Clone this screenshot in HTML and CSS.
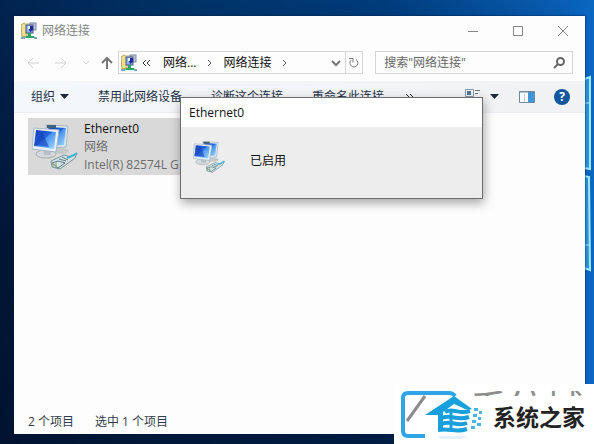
FILE: index.html
```html
<!DOCTYPE html>
<html lang="zh-CN">
<head>
    <meta charset="UTF-8">
    <meta name="viewport" content="width=device-width, initial-scale=1.0">
    <title>网络连接</title>
    <link rel="stylesheet" href="styles.css">
</head>
<body>
    <!-- shared icons -->
    <svg class="icon-defs" width="0" height="0">
        <symbol id="icon-folder" viewBox="0 0 16 18">
            <path d="M0 3l3-2 3 1v12l-5 1z" fill="#f0df8c" stroke="#b8a65a" stroke-width="1"/>
            <path d="M4 1h7v3H4z" fill="#d9d7b0"/>
            <rect x="9" y="1" width="6" height="7" fill="#b9c3dc" stroke="#7d8aa8"/>
            <rect x="5" y="3" width="7" height="8" fill="#8fb0ee" stroke="#4a5578"/>
            <path d="M7 4h5v4l-3 2z" fill="#1a2a9c"/>
            <rect x="7" y="4" width="2" height="3" fill="#e8f2ff"/>
            <path d="M7 11h3v3h3l1 2H4l1-2h2z" fill="#25a567"/>
            <path d="M0 16h4M13 16h3" stroke="#7fa6c4" stroke-width="2"/>
        </symbol>
        <symbol id="icon-network" viewBox="0 0 46 46">
            <defs>
                <linearGradient id="screen" x1="0" y1="0" x2="1" y2="1">
                    <stop offset="0" stop-color="#1238b4"/>
                    <stop offset="0.45" stop-color="#2565dc"/>
                    <stop offset="0.5" stop-color="#4b93f2"/>
                    <stop offset="1" stop-color="#a4dcff"/>
                </linearGradient>
            </defs>
            <ellipse cx="28" cy="27" rx="9" ry="3" fill="#c3c8cb"/>
            <path d="M14 1l22 1-2 21-16 1z" fill="#dfe9f0" stroke="#a5b4bf" stroke-width="1"/>
            <path d="M16 3l18 1-2 17-13 1z" fill="url(#screen)"/>
            <path d="M15 1h9v3h-9z" fill="#3f6078"/>
            <ellipse cx="14" cy="30" rx="10" ry="4" fill="#d6dadc" stroke="#a9aeb0"/>
            <path d="M11 24l8 1v6h-7z" fill="#b9c0c4"/>
            <path d="M2 4l25 2-3 22-24-3z" fill="#e8f1f6" stroke="#a8bac6" stroke-width="1"/>
            <path d="M4 6l20 2-2 17-20-3z" fill="url(#screen)"/>
            <path d="M10 7l7 16-15-2z" fill="#1744c0" opacity="0.65"/>
            <path d="M19 37l13-6 7 2 6-4-2 5-4 3-11 8-8-2z" fill="#d3e3e6" stroke="#78939b" stroke-width="1"/>
            <path d="M20 39l6-2 7 2-7 5zM27 35l7 2M30 33l6 3" fill="none" stroke="#607a82" stroke-width="1"/>
            <path d="M35 34l7-3 3-2" fill="none" stroke="#43b4d3" stroke-width="2"/>
            <path d="M21 38v5M24 38v6" stroke="#86a16e" stroke-width="1"/>
        </symbol>
    </svg>

    <!-- wallpaper light panes -->
    <svg class="wallpaper-light" viewBox="0 0 10 200" aria-hidden="true">
        <path d="M0 4l6-2v92l-6-1zM0 101l5 1 1 93-6-2z" fill="#2c93d8" stroke="#9fe8fb" stroke-width="2"/>
        <path d="M0 28h6M0 170h6" stroke="#9fe8fb" stroke-width="1"/>
    </svg>

    <main class="window">
        <header class="title-bar">
            <svg class="folder-icon"><use href="#icon-folder"/></svg>
            <h1 class="window-title">网络连接</h1>
            <div class="window-controls">
                <button type="button" aria-label="最小化"><svg width="12" height="12" viewBox="0 0 12 12"><path d="M1 6.500h10"/></svg></button>
                <button type="button" aria-label="最大化"><svg width="12" height="12" viewBox="0 0 12 12"><path d="M1.500 1.500h9v9h-9z"/></svg></button>
                <button type="button" aria-label="关闭"><svg width="12" height="12" viewBox="0 0 12 12"><path d="M1 1l10 10M11 1L1 11"/></svg></button>
            </div>
        </header>

        <nav class="nav-bar">
            <div class="nav-buttons">
                <button type="button" aria-label="后退" class="disabled"><svg width="12" height="12" viewBox="0 0 12 12"><path d="M12 6H1M6 1L1 6l5 5"/></svg></button>
                <button type="button" aria-label="前进" class="disabled"><svg width="12" height="12" viewBox="0 0 12 12"><path d="M0 6h11M6 1l5 5-5 5"/></svg></button>
                <button type="button" aria-label="历史记录" class="disabled history"><svg width="6" height="12" viewBox="0 0 6 12"><path d="M0 4l3 3 3-3"/></svg></button>
                <button type="button" aria-label="向上" class="up"><svg width="12" height="14" viewBox="0 0 12 14"><path d="M6 13V2M1 7l5-5 5 5"/></svg></button>
            </div>
            <div class="address-box">
                <svg class="folder-icon"><use href="#icon-folder"/></svg>
                <svg class="crumb-back" width="9" height="8" viewBox="0 0 9 8"><path d="M4 1L1 4l3 3M8 1L5 4l3 3"/></svg>
                <a href="#">网络...</a>
                <svg class="crumb-arrow" width="5" height="8" viewBox="0 0 5 8"><path d="M1 1l3 3-3 3"/></svg>
                <a href="#">网络连接</a>
                <svg class="crumb-arrow" width="5" height="8" viewBox="0 0 5 8"><path d="M1 1l3 3-3 3"/></svg>
                <button type="button" class="address-drop" aria-label="展开"><svg width="10" height="8" viewBox="0 0 10 8"><path d="M1 2l4 4 4-4"/></svg></button>
                <button type="button" class="refresh" aria-label="刷新"><svg width="12" height="12" viewBox="0 0 12 12"><path d="M8 2.500A4 4 0 1 1 3 3.200"/><path d="M1 1.500h4v4"/></svg></button>
            </div>
            <div class="search-box">
                <input type="text" aria-label="搜索" placeholder="搜索&quot;网络连接&quot;">
                <svg width="12" height="12" viewBox="0 0 12 12"><circle cx="7.500" cy="4.500" r="3.500"/><path d="M5 7l-4 4"/></svg>
            </div>
        </nav>

        <div class="toolbar">
            <button type="button" class="organize">组织 <svg width="9" height="6" viewBox="0 0 9 6"><path d="M0 0h9L4.500 5z"/></svg></button>
            <button type="button">禁用此网络设备</button>
            <button type="button">诊断这个连接</button>
            <button type="button">重命名此连接</button>
            <button type="button" aria-label="更多"><svg class="more" width="9" height="8" viewBox="0 0 9 8"><path d="M1 1l3 3-3 3M5 1l3 3-3 3"/></svg></button>
            <div class="view-buttons">
                <button type="button" aria-label="更改视图">
                    <svg width="16" height="16" viewBox="0 0 16 16">
                        <path d="M.5.5h8v7h-8zM.5 9.500h8v5h-8z" fill="#eef5fa" stroke="#8598a8"/>
                        <path d="M2 2h4v4H2z" fill="#4f7690"/>
                        <path d="M10 1.500h5M10 4.500h3M10 10.500h5" stroke="#687680"/>
                    </svg>
                </button>
                <button type="button" aria-label="更多视图选项"><svg width="9" height="6" viewBox="0 0 9 6"><path d="M0 0h9L4.500 5z"/></svg></button>
                <button type="button" class="pane-button" aria-label="预览窗格">
                    <svg width="16" height="12" viewBox="0 0 16 12">
                        <path d="M.5.5h15v11H.5z" fill="#fff" stroke="#71899e"/>
                        <path d="M9 1h6v10H9z" fill="#3b96da"/>
                        <path d="M0 1h16" stroke="#71899e"/><path d="M5.500 1v10" stroke="#c7d3dc"/>
                    </svg>
                </button>
                <button type="button" class="help-button" aria-label="帮助">?</button>
            </div>
        </div>

        <section class="connections">
            <article class="connection">
                <svg class="connection-icon"><use href="#icon-network"/></svg>
                <div class="connection-info">
                    <div class="connection-name">Ethernet0</div>
                    <div>网络</div>
                    <div>Intel(R) 82574L G</div>
                </div>
            </article>
        </section>

        <footer class="status-bar">
            <span>2 个项目</span>
            <span>选中 1 个项目</span>
        </footer>

        <dialog open class="status-dialog" aria-labelledby="dialogTitle">
            <h2 id="dialogTitle">Ethernet0</h2>
            <div class="dialog-body">
                <svg class="dialog-icon"><use href="#icon-network"/></svg>
                <p>已启用</p>
            </div>
        </dialog>
    </main>

    <!-- site badge in the corner -->
    <aside class="badge">
        <div class="badge-back" aria-hidden="true">系统城</div>
        <svg class="badge-logo" width="92" height="60" viewBox="0 0 92 60">
            <path d="M61 12c-2-3-4-3-6-3H14q-5 0-5 5v33q0 5 5 5h17" fill="none" stroke="#2fa4e7" stroke-width="4"/>
            <path d="M31 12L13 37" stroke="#8c8c8c" stroke-width="3"/>
            <!-- roof and walls -->
            <path d="M31 31L60 12l18 13c-3 1-6 1-9-1l-9-4-11 8v19h-5V31z" fill="#18a0dc"/>
            <!-- waving stripes -->
            <path d="M51 28c8-5 13 3 25-1M48 34c9-4 15 3 27-1M48 40c9-4 15 3 25-1M44 46c13-2 18 3 29-1" fill="none" stroke="#18a0dc" stroke-width="4"/>
            <path d="M57 27v18" stroke="#18a0dc" stroke-width="3"/>
            <path d="M80 24h4v3h-4zM85 27h3v3h-3zM79 30h4v3h-4zM84 33h3v3h-3zM78 36h4v3h-4zM83 39h4v3h-4zM77 42h4v3h-4z" fill="#49b4e5"/>
            <path d="M44 52h30l-7 3H47z" fill="#e2f3fb"/>
        </svg>
        <strong class="badge-name">系统之家</strong>
    </aside>
</body>
</html>
```
FILE: styles.css
```css
* {
    box-sizing: border-box;
}

body {
    margin: 0;
    min-height: 100vh;
    padding: 16px 9px 10px 14px;
    display: flex;
    position: relative;
    overflow: hidden;
    font-family: "Open Sans", "Noto Sans CJK SC", sans-serif;
    font-size: 12px;
    line-height: 18px;
    color: #111;
    background:
        linear-gradient(to bottom, rgba(0, 8, 28, 0) 0%, rgba(0, 8, 28, 0.5) 55%, rgba(0, 8, 28, 0.6) 100%) left / 96% 100% no-repeat,
        linear-gradient(to right, #022350 0%, #003266 30%, #003c7c 65%, #0758aa 90%, #0a67c2 100%);
}

button {
    padding: 0;
    border: none;
    background: none;
    font: inherit;
    color: inherit;
    display: flex;
    align-items: center;
    justify-content: center;
}

svg {
    flex: none;
    fill: none;
    stroke: none;
}

h1,
h2,
p {
    margin: 0;
    font-size: 12px;
    font-weight: normal;
}

.icon-defs {
    position: absolute;
}

.wallpaper-light {
    position: absolute;
    right: 0;
    top: 75px;
    width: 10px;
    height: 200px;
}

.window {
    position: relative;
    flex: 1;
    display: flex;
    flex-direction: column;
    background: #fdfdfd;
    box-shadow: 0 0 2px #001a3c;
}

/* title bar */
.title-bar {
    display: flex;
    align-items: center;
    height: 30px;
    padding-left: 7px;
}

.folder-icon {
    width: 16px;
    height: 18px;
}

.window-title {
    margin-left: 5px;
    color: #858585;
}

.window-controls {
    display: flex;
    margin-left: auto;
}

.window-controls button {
    width: 45px;
    height: 28px;
}

.window-controls svg {
    stroke: #858585;
}

/* navigation row */
.nav-bar {
    display: flex;
    align-items: center;
    gap: 12px;
    padding: 5px 12px 7px 13px;
}

.nav-buttons {
    display: flex;
    align-items: center;
    gap: 16px;
    margin-right: -7px;
}

.nav-buttons svg {
    stroke: #777;
    stroke-width: 2;
}

.nav-buttons .disabled svg {
    stroke: #d2d2d2;
    stroke-width: 1;
}

.nav-buttons .up {
    margin-left: -4px;
}

.address-box,
.search-box {
    display: flex;
    align-items: center;
    height: 23px;
    border: 1px solid #d5d5d5;
}

.address-box {
    flex: 4;
    padding-left: 2px;
}

.address-box a {
    color: #111;
    text-decoration: none;
}

.crumb-back {
    margin: 0 12px 0 5px;
    stroke: #333;
}

.crumb-arrow {
    margin: 0 11px;
    stroke: #555;
}

.address-drop {
    margin-left: auto;
    width: 18px;
}

.address-drop svg,
.refresh svg {
    stroke: #777;
    stroke-width: 2;
}

.refresh svg {
    stroke-width: 1;
}

.refresh {
    width: 17px;
    height: 21px;
    border-left: 1px solid #d5d5d5;
}

.search-box {
    flex: 3;
    min-width: 0;
    padding: 0 7px 0 8px;
}

.search-box input {
    flex: 1;
    min-width: 0;
    padding: 0;
    border: none;
    outline: none;
    background: none;
    font: inherit;
}

.search-box input::placeholder {
    color: #666;
}

.search-box svg {
    stroke: #666;
    stroke-width: 2;
}

/* command bar */
.toolbar {
    display: flex;
    align-items: center;
    gap: 29px;
    height: 32px;
    padding: 0 15px 0 17px;
    color: #1e3048;
    background: linear-gradient(to right, #f4f7fb, #f1f2f4);
    border-bottom: 1px solid #ebedf0;
    white-space: nowrap;
}

.organize {
    gap: 5px;
}

.toolbar .organize svg path,
.view-buttons button:nth-child(2) path {
    fill: #1d2733;
}

.more {
    margin-left: -8px;
    stroke: #222;
}

.view-buttons {
    display: flex;
    align-items: center;
    gap: 9px;
    margin-left: auto;
}

.pane-button {
    margin-left: 11px;
}

.help-button {
    width: 16px;
    height: 16px;
    margin-left: 10px;
    border-radius: 50%;
    background: #12589f;
    color: #fff;
    font-size: 12px;
    font-weight: bold;
}

/* connection list */
.connections {
    flex: 1;
    padding: 5px 14px;
}

.connection {
    display: flex;
    align-items: center;
    width: 252px;
    height: 57px;
    padding-left: 4px;
    background: #d9d9d9;
    color: #6d6d6d;
    white-space: nowrap;
}

.connection-icon {
    width: 46px;
    height: 46px;
}

.connection-info {
    margin-left: 6px;
}

.connection-name {
    color: #111;
}

/* status bar */
.status-bar {
    display: flex;
    gap: 21px;
    padding: 0 14px 3px;
    color: #333d4a;
}

/* connection state popup */
.status-dialog {
    position: absolute;
    top: 81px;
    left: 166px;
    margin: 0;
    width: 303px;
    padding: 0;
    border: 1px solid #6e6e6e;
    background: #ededed;
    color: #111;
    box-shadow: 1px 4px 10px rgba(0, 0, 0, 0.35);
}

.status-dialog h2 {
    padding: 6px 8px 5px;
    line-height: 18px;
    background: #fff;
}

.dialog-body {
    display: flex;
    align-items: center;
    gap: 25px;
    height: 71px;
    padding: 0 12px 12px;
}

.dialog-icon {
    width: 32px;
    height: 32px;
}

.dialog-body p {
    padding-top: 8px;
}

/* corner badge */
.badge {
    position: absolute;
    right: 0;
    bottom: 0;
    width: 200px;
    height: 60px;
    display: flex;
    align-items: center;
    gap: 7px;
    background: #fff;
}

.badge-back {
    position: absolute;
    left: 76px;
    top: 7px;
    height: 5px;
    overflow: hidden;
    font-size: 38px;
    line-height: 32px;
    color: #8c8c8c;
    white-space: nowrap;
}

.badge-name {
    padding-top: 6px;
    font-size: 23px;
    line-height: 24px;
    color: #222;
    white-space: nowrap;
}
```
